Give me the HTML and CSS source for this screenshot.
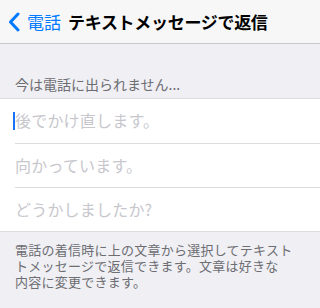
FILE: index.html
```html
<!DOCTYPE html>
<html lang="ja">
<head>
    <meta charset="UTF-8">
    <meta name="viewport" content="width=device-width, initial-scale=1.0">
    <title>テキストメッセージで返信</title>
    <link rel="stylesheet" href="styles.css">
</head>
<body>
    <div class="navbar">
        <div class="back">
            <svg class="chevron" width="12" height="20" viewBox="0 0 12 20">
                <polyline points="10,2 2.5,10 10,18" fill="none" stroke="#007aff" stroke-width="3" stroke-linecap="round" stroke-linejoin="round"/>
            </svg>
            <span class="back-label">電話</span>
        </div>
        <div class="nav-title">テキストメッセージで返信</div>
    </div>

    <div class="section-header">今は電話に出られません...</div>

    <div class="list">
        <div class="row editing">後でかけ直します。</div>
        <div class="row">向かっています。</div>
        <div class="row">どうかしましたか?</div>
    </div>

    <div class="section-footer">
        <div class="footer-line">電話の着信時に上の文章から選択してテキスト</div>
        <div class="footer-line">トメッセージで返信できます。文章は好きな</div>
        <div class="footer-line">内容に変更できます。</div>
    </div>
</body>
</html>
```

FILE: styles.css
```css
* {
    margin: 0;
    padding: 0;
    box-sizing: border-box;
}

body {
    font-family: "Noto Sans CJK JP", "Noto Sans", sans-serif;
    background-color: #efeff4;
    height: 100vh;
    overflow: hidden;
}

.navbar {
    height: 44px;
    display: flex;
    align-items: center;
    background-color: #f7f7f8;
    border-bottom: 1px solid #c8c7cc;
    padding-left: 8px;
}

.back {
    display: flex;
    align-items: center;
    gap: 7px;
    color: #007aff;
}

.chevron {
    display: block;
    margin-top: 1px;
}

.back-label {
    font-size: 17px;
    line-height: 20px;
}

.nav-title {
    margin-left: 7px;
    font-size: 17px;
    font-weight: 700;
    line-height: 20px;
    letter-spacing: -0.3px;
    color: #000;
}

.section-header {
    padding: 32px 15px 6px;
    font-size: 14px;
    line-height: 16px;
    color: #6d6d72;
}

.list {
    background-color: #fff;
    border-top: 1px solid #dcdce0;
    border-bottom: 1px solid #dcdce0;
}

.row {
    position: relative;
    height: 44px;
    display: flex;
    align-items: center;
    padding: 0 0 2px 15px;
    font-size: 16px;
    letter-spacing: 0.2px;
    color: #c7c7cd;
}

.row + .row {
    border-top: 1px solid transparent;
}

.row + .row::after {
    content: "";
    position: absolute;
    top: -1px;
    left: 15px;
    right: 0;
    border-top: 1px solid #dcdce0;
}

.editing::before {
    content: "";
    position: absolute;
    left: 13px;
    top: 13px;
    width: 2px;
    height: 18px;
    background-color: #1a73f5;
}

.section-footer {
    padding: 10px 15px;
    font-size: 13px;
    letter-spacing: 0.25px;
    color: #6d6d72;
}

.footer-line {
    height: 16px;
    line-height: 16px;
    white-space: nowrap;
}
```
